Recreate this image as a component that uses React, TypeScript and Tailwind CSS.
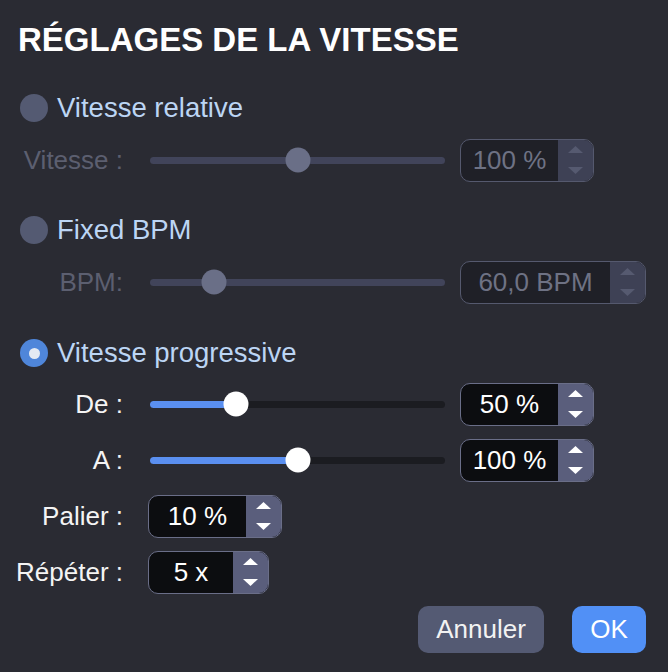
import React from "react";

function Radio({ active }: { active?: boolean }) {
  if (active) {
    return (
      <div className="w-[28px] h-[28px] rounded-full bg-[#4f86da] flex items-center justify-center shrink-0">
        <div className="w-[11px] h-[11px] rounded-full bg-[#e4eaf3]" />
      </div>
    );
  }
  return <div className="w-[28px] h-[28px] rounded-full bg-[#545a72] shrink-0" />;
}

function Slider({ pos, disabled }: { pos: number; disabled?: boolean }) {
  return (
    <div className="relative w-[295px] h-[7px] shrink-0">
      <div className={"absolute inset-0 rounded-full " + (disabled ? "bg-[#41445a]" : "bg-[#1b1c21]")} />
      {!disabled && (
        <div className="absolute left-0 top-0 h-[7px] rounded-full bg-[#5a8ff0]" style={{ width: pos }} />
      )}
      <div
        className={"absolute top-1/2 w-[25px] h-[25px] -translate-y-1/2 -translate-x-1/2 rounded-full " + (disabled ? "bg-[#6a6f87]" : "bg-white")}
        style={{ left: pos }}
      />
    </div>
  );
}

function Arrows({ disabled }: { disabled?: boolean }) {
  const c = disabled ? "#565a70" : "#ffffff";
  return (
    <div className="flex flex-col items-center justify-center gap-[14px]">
      <svg width="15" height="7" viewBox="0 0 15 7">
        <path d="M7.5 0 L15 7 L0 7 Z" fill={c} />
      </svg>
      <svg width="15" height="7" viewBox="0 0 15 7">
        <path d="M0 0 L15 0 L7.5 7 Z" fill={c} />
      </svg>
    </div>
  );
}

function Spin({ value, w, disabled }: { value: string; w: string; disabled?: boolean }) {
  return (
    <div
      className={
        "flex h-[43px] rounded-[10px] border-[1.5px] overflow-hidden shrink-0 " +
        w +
        (disabled ? " border-[#55596e] bg-[#1f2027]" : " border-[#6a6e88] bg-[#0c0d10]")
      }
    >
      <div
        className={
          "flex-1 flex items-center justify-center text-[26px] whitespace-nowrap " +
          (disabled ? "text-[#6e7284]" : "text-white")
        }
      >
        {value}
      </div>
      <div className={"w-[35px] flex items-center justify-center " + (disabled ? "bg-[#3e4155]" : "bg-[#5a5e7c]")}>
        <Arrows disabled={disabled} />
      </div>
    </div>
  );
}

function SliderRow({
  label,
  pos,
  value,
  spinW,
  disabled,
  mt,
}: {
  label: string;
  pos: number;
  value: string;
  spinW: string;
  disabled?: boolean;
  mt: string;
}) {
  return (
    <div className={"flex items-center h-[48px] " + mt}>
      <div
        className={
          "w-[105px] flex justify-end whitespace-nowrap text-[26px] shrink-0 " +
          (disabled ? "text-[#5c5f70]" : "text-[#f4f4f4]")
        }
      >
        {label}
      </div>
      <div className="ml-[27px]">
        <Slider pos={pos} disabled={disabled} />
      </div>
      <div className="ml-[15px]">
        <Spin value={value} w={spinW} disabled={disabled} />
      </div>
    </div>
  );
}

function RadioRow({ label, active, mt }: { label: string; active?: boolean; mt: string }) {
  return (
    <div className={"flex items-center h-[48px] " + mt}>
      <div className="ml-[2px]">
        <Radio active={active} />
      </div>
      <div className="ml-[9px] text-[27.5px] text-[#bcd5f4] whitespace-nowrap">{label}</div>
    </div>
  );
}

function SpinRow({ label, value, w, mt }: { label: string; value: string; w: string; mt: string }) {
  return (
    <div className={"flex items-center h-[48px] " + mt}>
      <div className="w-[105px] flex justify-end whitespace-nowrap text-[26px] text-[#f4f4f4] shrink-0">
        {label}
      </div>
      <div className="ml-[25px]">
        <Spin value={value} w={w} />
      </div>
    </div>
  );
}

export default function App() {
  return (
    <div
      className="w-[668px] h-[672px] bg-[#2a2b33] overflow-hidden px-[18px]"
      style={{ fontFamily: '"Liberation Sans", Arial, Helvetica, sans-serif' }}
    >
      <div className="h-[80px] flex items-center">
        <div className="text-[33px] font-bold text-white whitespace-nowrap">RÉGLAGES DE LA VITESSE</div>
      </div>
      <RadioRow label="Vitesse relative" mt="mt-[4px]" />
      <SliderRow label="Vitesse :" pos={148} value="100 %" spinW="w-[134px]" disabled mt="mt-[4px]" />
      <RadioRow label="Fixed BPM" mt="mt-[22px]" />
      <SliderRow label="BPM:" pos={64} value="60,0 BPM" spinW="w-[186px]" disabled mt="mt-[4px]" />
      <RadioRow label="Vitesse progressive" active mt="mt-[23px]" />
      <SliderRow label="De :" pos={86} value="50 %" spinW="w-[134px]" mt="mt-[3px]" />
      <SliderRow label="A :" pos={148} value="100 %" spinW="w-[134px]" mt="mt-[8px]" />
      <SpinRow label="Palier :" value="10 %" w="w-[134px]" mt="mt-[8px]" />
      <SpinRow label="Répéter :" value="5 x" w="w-[121px]" mt="mt-[8px]" />
      <div className="flex justify-end gap-[28px] mt-[10px] pr-[4px]">
        <button className="w-[126px] h-[47px] rounded-[10px] bg-[#545a73] text-[#f2f2f2] text-[26px]">
          Annuler
        </button>
        <button className="w-[74px] h-[47px] rounded-[10px] bg-[#5190f6] text-white text-[26px]">OK</button>
      </div>
    </div>
  );
}
